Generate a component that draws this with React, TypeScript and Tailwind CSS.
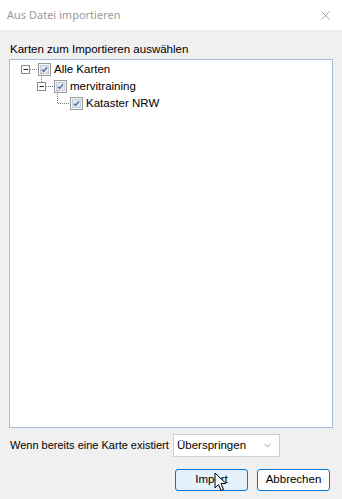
import { ChevronDown, X } from "lucide-react";

type Node = { label: string; level: number; expander: boolean };

const nodes: Node[] = [
  { label: "Alle Karten", level: 0, expander: true },
  { label: "mervitraining", level: 1, expander: true },
  { label: "Kataster NRW", level: 2, expander: false },
];

function CheckBox() {
  return (
    <svg width="13" height="13" viewBox="0 0 13 13" className="shrink-0">
      <rect x="0.5" y="0.5" width="12" height="12" fill="#f3f6fa" stroke="#9a9a9a" />
      <rect x="2.5" y="2.5" width="8" height="8" fill="#dfe6ef" stroke="#c4cdd8" />
      <path d="M4 6.8 L5.6 8.4 L9 4.4" fill="none" stroke="#46618f" strokeWidth="1.3" />
    </svg>
  );
}

// connector cell: 18px wide, row is 17px tall
function Connector({ node }: { node: Node }) {
  return (
    <svg width="18" height="17" className="shrink-0 overflow-visible">
      {node.level > 0 && (
        <line x1="5.5" y1="-5" x2="5.5" y2={node.expander ? 4 : 8.5} stroke="#7a7a7a" strokeDasharray="1 1" />
      )}
      {node.expander ? (
        <>
          <rect x="1.5" y="4.5" width="8" height="8" fill="#fff" stroke="#8c8c8c" />
          <line x1="3.5" y1="8.5" x2="8" y2="8.5" stroke="#222" />
          <line x1="10" y1="8.5" x2="18" y2="8.5" stroke="#7a7a7a" strokeDasharray="1 1" />
        </>
      ) : (
        <line x1="6" y1="8.5" x2="18" y2="8.5" stroke="#7a7a7a" strokeDasharray="1 1" />
      )}
    </svg>
  );
}

function Cursor() {
  return (
    <svg width="14" height="20" viewBox="0 0 14 20" className="absolute left-[38px] top-[2px] pointer-events-none">
      <path d="M1 1 L1 16 L4.5 12.5 L7 18.5 L9.5 17.5 L7 11.5 L12 11.5 Z" fill="#fff" stroke="#000" strokeWidth="1" strokeLinejoin="round" />
    </svg>
  );
}

export default function App() {
  return (
    <div className="w-[342px] h-[499px] bg-[#f0f0f0] flex flex-col overflow-hidden text-[11.5px] text-black font-['Liberation_Sans',Arial,sans-serif]">
      {/* Title bar */}
      <div className="h-[30px] bg-white flex items-center justify-between pl-[7px] pr-[9px] shrink-0">
        <span className="text-[11px] text-[#9a9a9a] font-['Noto_Sans',sans-serif]">Aus Datei importieren</span>
        <X className="w-[15px] h-[15px] text-[#8a8a8a]" strokeWidth={1.2} />
      </div>

      <div className="flex flex-col px-[9px] pt-[12px]">
        <div className="h-[17px] leading-[14px] pl-[1px] whitespace-nowrap">Karten zum Importieren auswählen</div>

        {/* Tree */}
        <div className="h-[369px] bg-white border border-[#a9bbd9] pt-[1px] pl-[10px]">
          {nodes.map((n) => (
            <div
              key={n.label}
              className="h-[17px] flex items-center"
              style={{ paddingLeft: n.level * 16 }}
            >
              <Connector node={n} />
              <CheckBox />
              <span className="ml-[3px] leading-[17px]">{n.label}</span>
            </div>
          ))}
        </div>

        {/* Existing map option */}
        <div className="flex items-center mt-[6px] h-[23px]">
          <span className="pl-[1px] w-[164px] whitespace-nowrap text-[11px]">Wenn bereits eine Karte existiert</span>
          <div className="w-[107px] h-[23px] bg-white border border-[#cfcfcf] flex items-center justify-between pl-[3px] pr-[6px]">
            <span>Überspringen</span>
            <ChevronDown className="w-[11px] h-[11px] text-[#666]" strokeWidth={1.5} />
          </div>
        </div>

        {/* Buttons */}
        <div className="flex justify-end gap-[9px] mt-[12px] pr-[3px]">
          <div className="relative w-[73px] h-[22px] rounded-[3px] border border-[#0078d7] bg-[#e5f1fb] flex items-center justify-center">
            Import
            <Cursor />
          </div>
          <div className="w-[73px] h-[22px] rounded-[3px] border border-[#0078d7] bg-[#fdfdfd] flex items-center justify-center">
            Abbrechen
          </div>
        </div>
      </div>
    </div>
  );
}
